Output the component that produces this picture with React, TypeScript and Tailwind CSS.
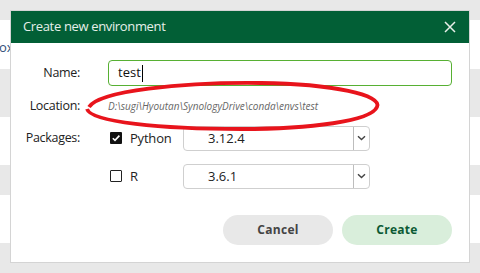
import React from 'react';

const font = { fontFamily: '"Open Sans", "Noto Sans", sans-serif' };

const Chevron = () => (
  <svg width="9" height="6" viewBox="0 0 9 6" className="text-[#444]">
    <path d="M1 1.2 L4.5 4.6 L8 1.2" fill="none" stroke="currentColor" strokeWidth="1.4" />
  </svg>
);

const Select = ({ value }: { value: string }) => (
  <div className="flex h-[25px] w-[187px] items-stretch rounded-[4px] border border-[#cfcfcf] bg-white">
    <div className="flex flex-1 items-center pl-[24px] text-[13px] text-[#222]">{value}</div>
    <div className="flex w-[16px] items-center justify-center border-l border-[#bdbdbd]">
      <Chevron />
    </div>
  </div>
);

const Check = ({ checked }: { checked: boolean }) =>
  checked ? (
    <div className="flex h-[12px] w-[12px] items-center justify-center rounded-[1px] bg-[#111]">
      <svg width="10" height="10" viewBox="0 0 10 10">
        <path d="M1.8 5.2 L4 7.4 L8.4 2.6" fill="none" stroke="white" strokeWidth="1.6" />
      </svg>
    </div>
  ) : (
    <div className="h-[12px] w-[12px] rounded-[1px] border-[1.5px] border-[#222] bg-white" />
  );

const Label = ({ children, className = '' }: { children: React.ReactNode; className?: string }) => (
  <div className={`w-[70px] pr-[1px] text-right text-[12.5px] tracking-[-0.3px] text-[#222] ${className}`}>{children}</div>
);

export default function App() {
  return (
    <div className="relative h-[273px] w-[480px] overflow-hidden bg-[#e8e8e8]" style={font}>
      {/* underlying page rows */}
      <div className="flex flex-col">
        <div className="h-[20px]" />
        <div className="flex h-[49px] items-center bg-white pt-[6px] text-[13px] text-[#2f4f78]">
          <span className="-ml-[1px]">ox</span>
        </div>
        <div className="h-[48px]" />
        <div className="h-[48px] bg-white" />
        <div className="h-[30px]" />
        <div className="h-[48px] bg-white" />
      </div>

      {/* dialog */}
      <div className="absolute left-[10px] top-[10px] flex h-[253px] w-[460px] flex-col border border-[#d4d4d4] bg-white">
        <div className="flex h-[32px] shrink-0 items-center justify-between bg-[#025f36] pl-[12px] pr-[13px]">
          <span className="text-[13px] tracking-[-0.35px] text-[#e6efe9]">Create new environment</span>
          <svg width="12" height="12" viewBox="0 0 12 12">
            <path d="M1 1 L11 11 M11 1 L1 11" stroke="#e8efe9" strokeWidth="1.5" />
          </svg>
        </div>

        <div className="relative flex flex-1 flex-col pt-[17px] pr-[17px]">
          <div className="flex items-center">
            <Label>Name:</Label>
            <div className="ml-[27px] flex h-[26px] flex-1 items-center rounded-[4px] border border-[#57b033] pl-[9px] text-[13px] text-[#111]">
              test<span className="ml-[1px] h-[17px] w-px bg-black" />
            </div>
          </div>

          <div className="mt-[11px] flex items-center">
            <Label>Location:</Label>
            <div className="ml-[27px] text-[10px] italic text-[#666]">D:\sugi\Hyoutan\SynologyDrive\conda\envs\test</div>
          </div>

          <div className="mt-[10px] flex">
            <Label className="pt-[3px]">Packages:</Label>
            <div className="ml-[29px] flex flex-col gap-[13px]">
              <div className="flex items-center">
                <Check checked />
                <span className="ml-[8px] w-[53px] text-[13px] tracking-[-0.2px] text-[#222]">Python</span>
                <Select value="3.12.4" />
              </div>
              <div className="flex items-center">
                <Check checked={false} />
                <span className="ml-[8px] w-[53px] text-[13px] text-[#222]">R</span>
                <Select value="3.6.1" />
              </div>
            </div>
          </div>

          <div className="mt-auto mb-[17px] flex justify-end gap-[9px]">
            <button className="h-[30px] w-[110px] rounded-full bg-[#e8e8e8] text-[12px] font-bold tracking-[0.3px] text-[#444]">Cancel</button>
            <button className="h-[30px] w-[110px] rounded-full bg-[#d9eedb] text-[12px] font-bold tracking-[0.3px] text-[#0b5a34]">Create</button>
          </div>
        </div>

        {/* red annotation */}
        <svg className="pointer-events-none absolute left-0 top-0" width="460" height="253" viewBox="0 0 460 253">
          <path
            d="M78 96 C 88 80, 170 71, 250 72 C 322 73, 372 84, 366 96 C 360 110, 300 118, 230 118 C 150 118, 80 111, 76 98"
            fill="none"
            stroke="#e8141c"
            strokeWidth="3.8"
          />
        </svg>
      </div>
    </div>
  );
}
